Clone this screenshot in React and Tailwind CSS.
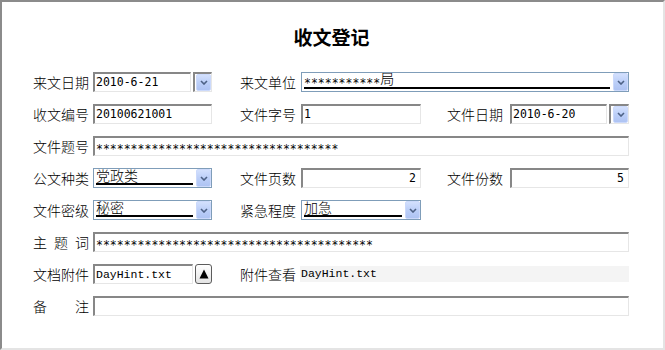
import React from "react";

const cjk = { fontFamily: '"Noto Sans CJK SC", "Noto Sans", sans-serif' };
const mono = { fontFamily: '"DejaVu Sans Mono", "Noto Sans CJK SC", monospace' };
const serifMono = { fontFamily: '"Liberation Mono", monospace' };

const sunken =
  "border-t-2 border-l-2 border-b border-r border-t-[#878787] border-l-[#878787] border-b-[#e6e6e6] border-r-[#e6e6e6] bg-white";

const Label = ({ children, w = "w-[60px]" }) => (
  <div className={`${w} shrink-0 text-[14px] leading-[20px] font-light text-black`} style={cjk}>
    {children}
  </div>
);

const Spaced = ({ chars }) => (
  <div className="w-[56px] flex justify-between">
    {chars.map((c) => (
      <span key={c}>{c}</span>
    ))}
  </div>
);

// asterisks sit high in the mono fonts, drop them to the middle like the reference
const Stars = ({ n }) => <span className="relative top-[3px]">{"*".repeat(n)}</span>;

const DropBtn = () => (
  <div className="w-[15px] h-full flex items-center justify-center rounded-[2px] border border-[#cbd9fb] bg-gradient-to-b from-[#d3e0fd] via-[#bccff8] to-[#aec3f3]">
    <svg width="8" height="5" viewBox="0 0 8 5">
      <path d="M1 1 L4 4 L7 1" stroke="#4d6185" strokeWidth="1.6" fill="none" />
    </svg>
  </div>
);

const TextBox = ({ value = "", w, right, font = mono }) => (
  <div
    className={`${sunken} ${w} h-[20px] flex items-center ${right ? "justify-end pr-[4px]" : "pl-[1px]"} text-[11.5px] text-black overflow-hidden whitespace-nowrap`}
    style={font}
  >
    {value}
  </div>
);

const DateBox = ({ value, w, bw }) => (
  <div className="flex gap-[2px]">
    <TextBox value={value} w={w} />
    <div className={`${sunken} ${bw} h-[20px] flex justify-end`}>
      <DropBtn />
    </div>
  </div>
);

const Combo = ({ value, w, mono: isMono }) => (
  <div className={`${w} h-[20px] border border-[#7f9db9] bg-white flex`}>
    <div className="flex-1 pl-[2px] pr-[3px] flex items-end pb-[2px]">
      <div
        className={`w-full border-b-2 border-black ${isMono ? "text-[11.5px] leading-[14px]" : "text-[14px] leading-[15px] font-light"} text-black whitespace-nowrap`}
        style={isMono ? mono : cjk}
      >
        {value}
      </div>
    </div>
    <DropBtn />
  </div>
);

const UploadBtn = () => (
  <div className="w-[17px] h-[20px] rounded-[3px] border border-[#5c5c5c] bg-gradient-to-b from-white to-[#e4e4e4] flex items-center justify-center">
    <svg width="10" height="10" viewBox="0 0 10 10">
      <path d="M5 0.5 L9.5 9.5 L0.5 9.5 Z" fill="#000" />
    </svg>
  </div>
);

const Row = ({ children }) => <div className="h-[20px] flex items-center">{children}</div>;

const Col = ({ w, children }) => <div className={`${w} flex items-center`}>{children}</div>;

export default function App() {
  return (
    <div className="w-[665px] h-[350px] bg-white border-t-2 border-l-2 border-[#8b8b8b] border-b-2 border-r-2 border-b-[#e4e4e4] border-r-[#e4e4e4]">
      <div className="pt-[25px] pl-[31px]">
        <div className="text-[19px] leading-[20px] font-bold text-black text-center -ml-[31px] pr-[2px]" style={cjk}>
          收文登记
        </div>

        <div className="mt-[25px] flex flex-col gap-[12px]">
          <Row>
            <Col w="w-[207px]">
              <Label>来文日期</Label>
              <DateBox value="2010-6-21" w="w-[98px]" bw="w-[19px]" />
            </Col>
            <Col w="w-[389px]">
              <Label w="w-[61px]">来文单位</Label>
              <Combo
                value={
                  <>
                    <Stars n={11} />
                    <span className="text-[14px] font-light" style={cjk}>局</span>
                  </>
                }
                w="w-[328px]"
                mono
              />
            </Col>
          </Row>

          <Row>
            <Col w="w-[207px]">
              <Label>收文编号</Label>
              <TextBox value="20100621001" w="w-[119px]" />
            </Col>
            <Col w="w-[207px]">
              <Label w="w-[61px]">文件字号</Label>
              <TextBox value="1" w="w-[120px]" />
            </Col>
            <Col w="w-[182px]">
              <Label w="w-[63px]">文件日期</Label>
              <DateBox value="2010-6-20" w="w-[97px]" bw="w-[20px]" />
            </Col>
          </Row>

          <Row>
            <Label>文件题号</Label>
            <TextBox value={<Stars n={35} />} w="w-[536px]" />
          </Row>

          <Row>
            <Col w="w-[207px]">
              <Label>公文种类</Label>
              <Combo value="党政类" w="w-[119px]" />
            </Col>
            <Col w="w-[207px]">
              <Label w="w-[61px]">文件页数</Label>
              <TextBox value="2" w="w-[120px]" right />
            </Col>
            <Col w="w-[182px]">
              <Label w="w-[63px]">文件份数</Label>
              <TextBox value="5" w="w-[119px]" right />
            </Col>
          </Row>

          <Row>
            <Col w="w-[207px]">
              <Label>文件密级</Label>
              <Combo value="秘密" w="w-[119px]" />
            </Col>
            <Col w="w-[207px]">
              <Label w="w-[61px]">紧急程度</Label>
              <Combo value="加急" w="w-[120px]" />
            </Col>
          </Row>

          <Row>
            <Label>
              <Spaced chars={["主", "题", "词"]} />
            </Label>
            <TextBox value={<Stars n={40} />} w="w-[536px]" />
          </Row>

          <Row>
            <Col w="w-[207px]">
              <Label>文档附件</Label>
              <div className="flex gap-[2px]">
                <TextBox value="DayHint.txt" w="w-[100px]" font={serifMono} />
                <UploadBtn />
              </div>
            </Col>
            <Col w="w-[389px]">
              <Label w="w-[60px]">附件查看</Label>
              <div className="w-[329px] h-[16px] bg-[#f4f4f4] flex items-center pl-[1px] text-[11.5px] text-black" style={serifMono}>
                DayHint.txt
              </div>
            </Col>
          </Row>

          <Row>
            <Label>
              <Spaced chars={["备", "注"]} />
            </Label>
            <TextBox value="" w="w-[536px]" />
          </Row>
        </div>
      </div>
    </div>
  );
}
